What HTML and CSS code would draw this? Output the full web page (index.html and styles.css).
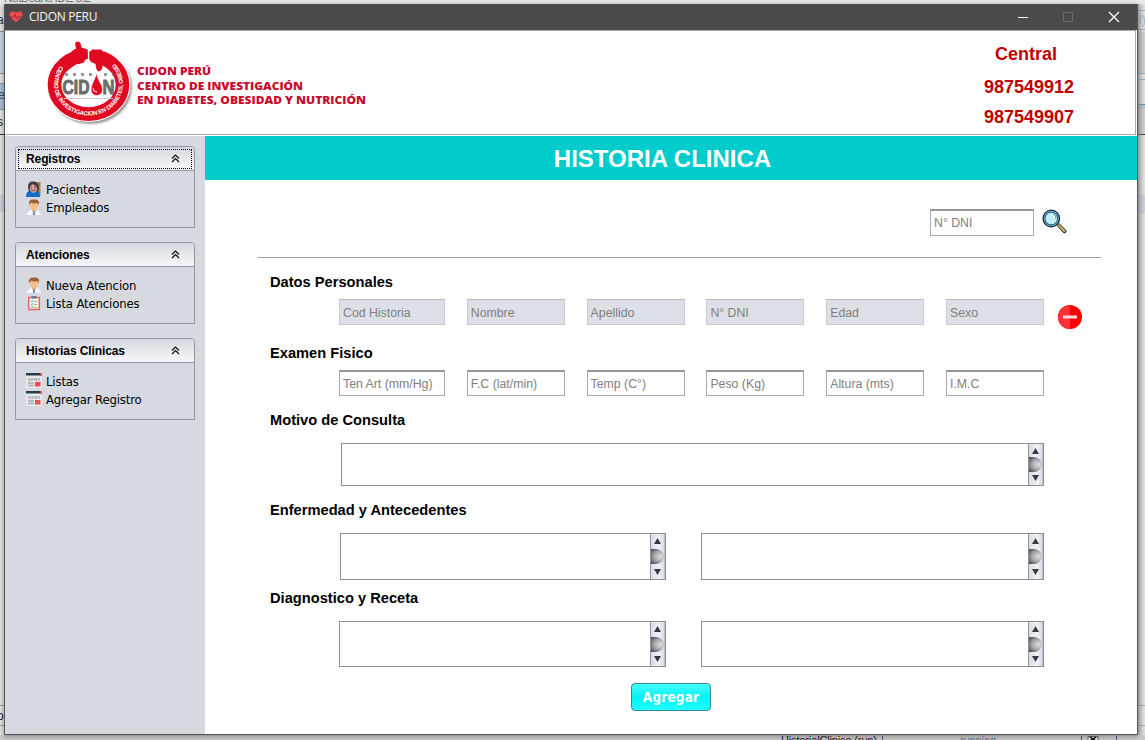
FILE: index.html
```html
<!DOCTYPE html>
<html lang="es">
<head>
<meta charset="utf-8">
<title>CIDON PERU</title>
<link rel="stylesheet" href="styles.css">
</head>
<body>
<div class="desktop">
  <svg class="backdrop" width="1145" height="740" viewBox="0 0 1145 740">
    <rect width="1145" height="740" fill="#e2e2e2"/>
    <rect width="1145" height="5" fill="#e9e9e9"/>
    <text x="4" y="2" font-size="12" fill="#777" textLength="87">NetBeans IDE 8.2</text>
    <rect y="31" width="5" height="42" fill="#c8d3e0"/><rect y="83" width="5" height="26" fill="#aebfd6"/>
    <path d="M0 31.500H5M0 73.500H5M0 83.500H5M0 109.500H5" stroke="#8795a8"/>
    <path d="M0 134.500H5" stroke="#333"/>
    <rect y="195" width="5" height="17" fill="#cdd0d8"/>
    <text x="-3" y="24" font-size="12" fill="#333">a</text>
    <text x="-2" y="99" font-size="12" fill="#2d5078">e</text>
    <text x="-3" y="126" font-size="12" fill="#222">s</text>
    <path d="M0 705.500H5M0 725.500H5" stroke="#8e9fae"/>
    <text x="-3" y="720" font-size="12" fill="#222">o</text>
    <linearGradient id="shade"><stop stop-color="#999"/><stop offset="1" stop-color="#999" stop-opacity="0"/></linearGradient>
    <rect x="1137" y="32" width="8" height="41" fill="#d0d0d0"/>
    <rect x="1137" y="104" width="8" height="30" fill="#d0d0d0"/>
    <path d="M1137 10.500H1145M1137 29.500H1145M1137 73.500H1145M1137 79.500H1145" stroke="#9bb0c6"/>
    <text x="1139" y="24" font-size="12" fill="#9fb4cc">l)</text>
    <path d="M1137 104.500H1145" stroke="#6686a8"/><path d="M1137 107H1145" stroke="#b0c5da" stroke-width="3"/>
    <path d="M1137 134.500H1145" stroke="#333"/>
    <rect x="1137" y="195" width="8" height="18" fill="#cfd1dc"/>
    <path d="M1137 705.500H1145M1137 725.500H1145" stroke="#9fb0bd"/>
    <rect x="1137" y="4" width="8" height="732" fill="url(#shade)" opacity=".65"/>
    <rect y="735" width="1145" height="5" fill="#c9c9c9"/>
    <text x="781" y="744" font-size="11" fill="#222" textLength="96">HistorialClinico (run)</text>
    <text x="960" y="744" font-size="11" fill="#5a7a98" textLength="36">running</text>
    <path d="M882.500 736V740M1081.500 736V740M1116.500 736V740" stroke="#557"/>
    <path d="M1088 740V736.500H1098V740" fill="#e5e5e5" stroke="#667"/>
    <path d="M1090 737L1096 741M1096 737L1090 741" stroke="#111" stroke-width="1.500"/>
  </svg>

  <div class="window">
    <div class="titlebar">
      <svg width="14" height="12" viewBox="0 0 14 12"><path d="M7 11.500L1.500 6.200C-.8 3.500.5.600 3.600.500 5.200.500 6.300 1.200 7 2.300 7.700 1.200 8.800.500 10.400.500c3.100.100 4.400 3 2.100 5.700z" fill="#ef4950"/><path d="M1 6h3.500L6 3.500 7.500 8 9 5.500 10 6h3" fill="none" stroke="#8e3038"/></svg>
      <span class="caption">CIDON PERU</span>
      <svg class="controls" width="120" height="26" viewBox="0 0 120 26"><path d="M4 13.500H14" stroke="#fff"/><path d="M49.500 8.500h9v9h-9z" fill="none" stroke="#6d6c6a"/><path d="M95 8l10 10M105 8L95 18" stroke="#fff" stroke-width="1.300"/></svg>
    </div>

    <header class="header">
      <svg class="logo" width="330" height="96" viewBox="40 36 330 96">
        <defs>
          <path id="ring" d="M61 65A34.500 31.500 0 1 0 116 65"/>
          <filter id="soft"><feGaussianBlur stdDeviation="1.300"/></filter>
        </defs>
        <ellipse cx="90.500" cy="87" rx="41.500" ry="37" fill="#999" filter="url(#soft)"/>
        <ellipse cx="88.500" cy="84.500" rx="42" ry="37.500" fill="#fff"/>
        <path d="M66 61L72 52 75.500 49.500 75.500 43Q77.500 40.500 80 43L81.500 48 88 50 93 49 100 49 105 53 112 61z" fill="#fff" stroke="#fff" stroke-width="3" stroke-linejoin="round"/>
        <ellipse cx="88.500" cy="84.800" rx="34" ry="29.300" fill="none" stroke="#df0920" stroke-width="13.600"/>
        <path d="M71 47H105L101 66H76z" fill="#fff"/>
        <path d="M61 66L70 55 72 51 76 48.500 75 43Q77.500 40 80.500 43L81.500 47.500 87.700 49.500 88 58.500 85 60 84 62.500 79 64 75 64.500 68 70z" fill="#df0920"/>
        <path d="M89.200 52L92.500 49.500 101 49.500 105 53 115 66 110 70 103 64.500 102 69Q99 73.500 96.500 69.500L95.500 64 91 62 89.200 59z" fill="#df0920"/>
        <text class="ringtext"><textPath href="#ring" startOffset="1" textLength="154">CENTRO DE INVESTIGACION EN DIABETES, OBESIDAD</textPath></text>
        <path d="M65 74.500H96M104 74.500H113" stroke="#888" stroke-width="2.500" stroke-dasharray="3 5"/>
        <text x="62.500" y="94" class="logoword" textLength="27" lengthAdjust="spacingAndGlyphs">CID</text>
        <text x="102.500" y="94" class="logoword" textLength="12" lengthAdjust="spacingAndGlyphs">N</text>
        <path d="M96.500 73C95 80 91 84 91 89.500c0 8 11.500 8 11.500 0C102.500 84 98 81 96.500 73z" fill="#df0920" stroke="#fff" stroke-width=".7"/>
        <path d="M93 88q0 4 4 4" fill="none" stroke="#fff"/>
        <path d="M64 98.500H113" stroke="#ccc"/>
        <g class="logotext"><text x="137" y="75" textLength="74" lengthAdjust="spacingAndGlyphs">CIDON PERÚ</text><text x="137" y="90" textLength="166" lengthAdjust="spacingAndGlyphs">CENTRO DE INVESTIGACIÓN</text><text x="137" y="104" textLength="229" lengthAdjust="spacingAndGlyphs">EN DIABETES, OBESIDAD Y NUTRICIÓN</text></g>
      </svg>
      <div class="phones"><span>Central</span><span>987549912</span><span>987549907</span></div>
    </header>

    <div class="content">
      <aside class="sidebar">
        <svg class="symbols" width="0" height="0">
          <symbol id="chev" viewBox="0 0 9 9"><path d="M1 4.500L4.500 1 8 4.500M1 8L4.500 4.500 8 8" fill="none" stroke="#111" stroke-width="1.200"/></symbol>
          <symbol id="patient" viewBox="0 0 16 16"><path d="M11.500 1h3v14h-2z" fill="#ad7f45"/><path d="M2 6Q2 0 7.500.500 13 0 13 7l-1 4H3z" fill="#403b48"/><path d="M4 5l3-2 4 3v4l-3.500 2L4 10z" fill="#dc9d8d"/><path d="M3 6h3M8 6h3M5 8l2 2 3-2" stroke="#754757" fill="none"/><path d="M0 16q0-6 4-6l3.500 2L11 10q3 1 3 6z" fill="#126bc5"/></symbol>
          <symbol id="doctor" viewBox="0 0 16 16"><path d="M1 16q0-4 5-5h4q5 1 5 5z" fill="#f6f7fb"/><path d="M6 9h4v3l-2 2-2-2z" fill="#e8af7c"/><path d="M3.500 4Q4 1 8 1t4.500 4l-1 4L8 11.500 4.500 9z" fill="#f4bd89"/><path d="M3 6Q2 0 8 .500 14 0 13 6L11.500 4Q8 5 5 3.500z" fill="#9b603b"/><path d="M7.200 12h1.600l.4 4H6.800z" fill="#7d90b5"/></symbol>
          <symbol id="clip" viewBox="0 0 16 16"><path d="M2.700 2.500h10.600v12H2.700z" fill="#ecf6f3" stroke="#ee655f" stroke-width="1.500"/><path d="M5.500 1h5v2.500h-5z" fill="#697a91"/><path d="M5 6l1 1 1-2M5 9l1 1 1-2M5 12l1 1 1-2" fill="none" stroke="#32a878" stroke-width=".7"/><path d="M8 6.500h3M8 9.500h3M8 12.500h3" stroke="#c5a761"/></symbol>
          <symbol id="news" viewBox="0 0 16 16"><path d="M0 2h16v13H0z" fill="#e9e9ed"/><path d="M0 0h16v2.500H0z" fill="#263c4a"/><path d="M14 0h2v2.500h-2z" fill="#e64b50"/><text x="2" y="7.500" font-size="4" textLength="12" fill="#777">NEWS</text><path d="M9 9h5.500v4.500H9z" fill="#f14a50"/><path d="M2 10h6M2 12.500h6" stroke="#aaa" stroke-width="1.300"/></symbol>
        </svg>
        <section class="panel">
          <h2 class="panel-head focused">Registros<svg width="9" height="9"><use href="#chev"/></svg></h2>
          <ul class="menu"><li><svg width="16" height="16"><use href="#patient"/></svg>Pacientes</li><li><svg width="16" height="16"><use href="#doctor"/></svg>Empleados</li></ul>
        </section>
        <section class="panel">
          <h2 class="panel-head">Atenciones<svg width="9" height="9"><use href="#chev"/></svg></h2>
          <ul class="menu"><li><svg width="16" height="16"><use href="#doctor"/></svg>Nueva Atencion</li><li><svg width="16" height="16"><use href="#clip"/></svg>Lista Atenciones</li></ul>
        </section>
        <section class="panel">
          <h2 class="panel-head">Historias Clinicas<svg width="9" height="9"><use href="#chev"/></svg></h2>
          <ul class="menu"><li><svg width="16" height="16"><use href="#news"/></svg>Listas</li><li><svg width="16" height="16"><use href="#news"/></svg>Agregar Registro</li></ul>
        </section>
      </aside>

      <main class="main">
        <h1 class="banner">HISTORIA CLINICA</h1>
        <div class="search">
          <div class="field dni">N° DNI</div>
          <svg width="25" height="26" viewBox="0 0 25 26"><path d="M15 16.500l2-2 7 7q.8 2-2 2.500z" fill="#d3ab68" stroke="#171e23"/><circle cx="9.300" cy="9.500" r="8.300" fill="#62b4d4" stroke="#152b36" stroke-width="1.200"/><circle cx="9.300" cy="9.500" r="6.300" fill="#bfeeff" stroke="#20465a" stroke-width=".9"/><path d="M10 6q3 .500 3.500 4" fill="none" stroke="#fff" stroke-width="1.500"/><path d="M11 5q3.500 1.500 3 5" fill="none" stroke="#316178" stroke-width=".7"/></svg>
        </div>
        <div class="rule"></div>

        <section class="group personal">
          <h3>Datos Personales</h3>
          <div class="fields disabled">
            <div class="field">Cod Historia</div><div class="field">Nombre</div><div class="field">Apellido</div><div class="field">N° DNI</div><div class="field">Edad</div><div class="field">Sexo</div>
            <svg class="remove" width="24" height="24" viewBox="0 0 24 24"><circle cx="12" cy="12" r="12" fill="#f00"/><path d="M12 0a12 12 0 0 0 0 24z" fill="#ff3038"/><path d="M5 10.500h14v3H5z" fill="#ffdce0"/></svg>
          </div>
        </section>
        <section class="group exam">
          <h3>Examen Fisico</h3>
          <div class="fields">
            <div class="field">Ten Art (mm/Hg)</div><div class="field">F.C (lat/min)</div><div class="field">Temp (C°)</div><div class="field">Peso (Kg)</div><div class="field">Altura (mts)</div><div class="field">I.M.C</div>
          </div>
        </section>
        <section class="group reason">
          <h3>Motivo de Consulta</h3>
          <div class="areas"><div class="area"><div class="scroll"><i class="up"></i><i class="thumb"></i><i class="down"></i></div></div></div>
        </section>
        <section class="group illness">
          <h3>Enfermedad y Antecedentes</h3>
          <div class="areas"><div class="area"><div class="scroll"><i class="up"></i><i class="thumb"></i><i class="down"></i></div></div><div class="area"><div class="scroll"><i class="up"></i><i class="thumb"></i><i class="down"></i></div></div></div>
        </section>
        <section class="group diagnosis">
          <h3>Diagnostico y Receta</h3>
          <div class="areas"><div class="area"><div class="scroll"><i class="up"></i><i class="thumb"></i><i class="down"></i></div></div><div class="area"><div class="scroll"><i class="up"></i><i class="thumb"></i><i class="down"></i></div></div></div>
        </section>
        <button class="add">Agregar</button>
      </main>
    </div>
  </div>
</div>
</body>
</html>
```

FILE: styles.css
```css
* { box-sizing: border-box; }
body { margin: 0; font-family: "Liberation Sans", Arial, sans-serif; color: #000; }
h1, h2, h3, ul { margin: 0; padding: 0; }
svg { display: block; flex: none; }
.desktop { position: relative; width: 1145px; height: 740px; overflow: hidden; }
.backdrop { position: absolute; left: 0; top: 0; }

.window { position: absolute; left: 4px; top: 4px; width: 1134px; height: 731px; display: flex; flex-direction: column; background: #fff; border: 1px solid #555; border-top: 0; box-shadow: 0 1px 5px rgba(0,0,0,.4); }
.titlebar { height: 26px; flex: none; display: flex; align-items: center; padding-left: 4px; background: #4b4a48; }
.caption { margin-left: 6px; color: #f4f4f4; font: 12px/16px "Open Sans", "Noto Sans", sans-serif; letter-spacing: -.3px; }
.controls { margin-left: auto; margin-right: 3px; }

.header { height: 105px; flex: none; display: flex; justify-content: space-between; border: 1px solid #aaa; border-left: 0; margin-right: 1px; padding: 5px 61px 0 35px; }
.ringtext { font: bold 6px "Liberation Sans", sans-serif; fill: #fff; }
.logoword { font: bold 21px "Liberation Sans", sans-serif; fill: #6d6d6d; stroke: #6d6d6d; stroke-width: 1px; }
.logotext { font: 800 11px "Open Sans", "Noto Sans", sans-serif; fill: #c90b30; }
.phones { display: flex; flex-direction: column; align-items: center; padding-top: 6px; color: #c00000; font-size: 18px; font-weight: bold; line-height: 24px; }
.phones span:nth-child(1) { margin-right: 6px; }
.phones span:nth-child(2) { margin-top: 9px; }
.phones span:nth-child(3) { margin-top: 6px; }

.content { display: flex; flex: 1; padding-top: 1px; }
.sidebar { width: 200px; flex: none; padding: 10px; display: flex; flex-direction: column; gap: 14px; background: #d6d9e0; }
.symbols { position: absolute; }
.panel { width: 180px; height: 82px; border: 1px solid #9297a1; border-radius: 4px 4px 0 0; }
.panel-head { height: 24px; display: flex; align-items: center; justify-content: space-between; padding: 0 14px 0 10px; border-bottom: 1px solid #9297a1; border-radius: 3px 3px 0 0; background: linear-gradient(#d5d8de, #f6f7f9); font-size: 12px; font-weight: bold; letter-spacing: -.1px; }
.focused { outline: 1px dotted #000; outline-offset: -3px; }
.menu { list-style: none; padding: 9px 0 0 10px; }
.menu li { height: 18px; display: flex; align-items: center; gap: 4px; font: 13px "DejaVu Sans Condensed", "DejaVu Sans", sans-serif; font-stretch: condensed; letter-spacing: -.15px; }

.main { flex: 1; display: flex; flex-direction: column; }
.banner { height: 44px; display: flex; align-items: center; justify-content: center; padding: 1px 17px 0 0; background: #00cccc; color: #fff; font-size: 24px; letter-spacing: 0; }
.search { display: flex; gap: 8px; margin: 29px 0 0 725px; }
.field { height: 26px; padding: 1px 0 0 3px; border: 1px solid #a8abad; border-top: 2px solid #95989b; background: #fff; color: #808080; font-size: 12.300px; line-height: 22px; white-space: nowrap; }
.dni { width: 104px; height: 27px; }
.rule { height: 1px; width: 843px; margin: 21px 0 0 53px; background: #a0a0a0; }
.group { padding-left: 65px; }
.group h3 { height: 18px; margin-bottom: 8px; font-size: 14.670px; line-height: 18px; }
.personal { margin-top: 15px; }
.exam { margin-top: 19px; }
.reason { margin-top: 15px; }
.illness { margin-top: 15px; }
.diagnosis { margin-top: 9px; }
.fields { display: grid; grid-template-columns: 106px 98px 98px 98px 98px 98px 24px; column-gap: 21.800px; margin-left: 69px; height: 26px; }
.disabled .field { background: #dde0e6; border: 1px solid #c9ccd2; border-top-color: #b5b9be; line-height: 25px; }
.remove { margin: 6px 0 0 -8px; }
.areas { display: grid; grid-template-columns: 327px 343px; column-gap: 35px; margin-left: 69px; }
.area { height: 46px; display: flex; justify-content: flex-end; border: 1px solid #8d9095; background: #fff; }
.reason h3 { margin-bottom: 14px; }
.reason .areas { grid-template-columns: 703px; margin-left: 71px; }
.reason .area { height: 43px; }
.illness h3, .diagnosis h3 { margin-bottom: 14px; }
.illness .areas { grid-template-columns: 326px 343px; margin-left: 70px; }
.illness .area { height: 47px; }
.scroll { width: 15px; display: flex; flex-direction: column; justify-content: space-between; padding: 4px 0; border-left: 1px solid #8d9095; border-right: 1px solid #b9bec8; background: linear-gradient(90deg, #d9dde5, #f0f2f6 60%, #d9dde5); }
.up, .down { width: 7px; height: 6px; margin-left: 3px; background: #38393d; clip-path: polygon(50% 0, 100% 100%, 0 100%); }
.down { clip-path: polygon(0 0, 100% 0, 50% 100%); }
.thumb { width: 13px; height: 15px; border-radius: 0 9px 9px 0 / 0 8px 8px 0; background: radial-gradient(ellipse at 75% 50%, #d4d5d8 10%, #a5a6a9 50%, #48494d 95%); }
.add { width: 80px; height: 28px; margin: 16px 0 0 426px; padding: 0; border: 1px solid #37888f; border-radius: 4px; background: linear-gradient(#4ff, #0ff0f4 45%, #00f7fb 60%, #2ff); color: #fff; font: bold 13.500px "DejaVu Sans Condensed", "DejaVu Sans", sans-serif; font-stretch: condensed; letter-spacing: .15px; }
```
